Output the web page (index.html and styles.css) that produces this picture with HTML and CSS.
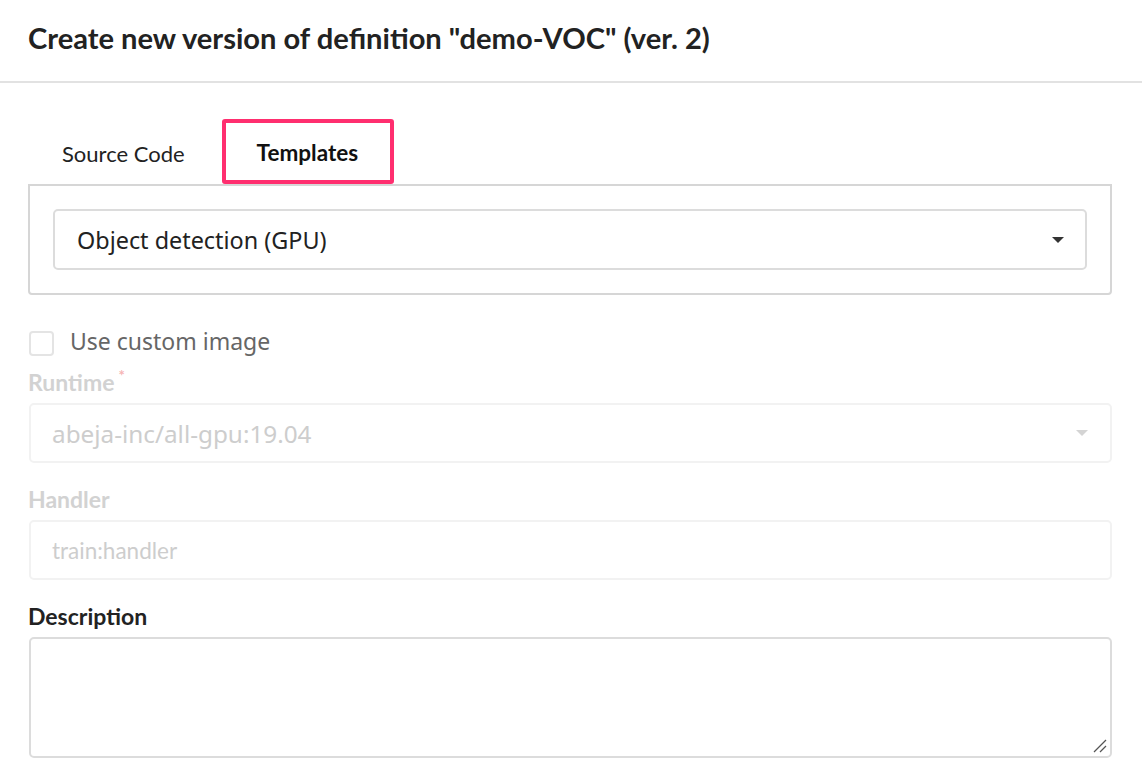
FILE: index.html
```html
<!DOCTYPE html>
<html>
<head>
<meta charset="utf-8">
<link rel="stylesheet" href="styles.css">
</head>
<body>
<header class="header">
  <h1 class="title">Create new version of definition "demo-VOC" (ver. 2)</h1>
</header>
<main class="content">
  <div class="tabs">
    <div class="tab">Source Code</div>
    <div class="tab tab-active">Templates</div>
  </div>
  <div class="tab-panel">
    <div class="select">
      <span class="select-text">Object detection (GPU)</span>
      <span class="caret"></span>
    </div>
  </div>
  <label class="check-row">
    <span class="checkbox"></span>
    <span class="check-label">Use custom image</span>
  </label>
  <div class="field">
    <div class="label label-disabled">Runtime<span class="req">*</span></div>
    <div class="input input-disabled">
      <span>abeja-inc/all-gpu:19.04</span>
      <span class="caret caret-disabled"></span>
    </div>
  </div>
  <div class="field">
    <div class="label label-disabled">Handler</div>
    <div class="input input-disabled input-lato">
      <span>train:handler</span>
    </div>
  </div>
  <div class="field">
    <div class="label">Description</div>
    <div class="textarea">
      <svg class="resizer" width="14" height="14" viewBox="0 0 14 14">
        <line x1="1" y1="13" x2="13" y2="1" stroke="#555" stroke-width="1.2"/>
        <line x1="7" y1="13" x2="13" y2="7" stroke="#555" stroke-width="1.2"/>
      </svg>
    </div>
  </div>
</main>
</body>
</html>
```

FILE: styles.css
```css
* { box-sizing: border-box; }
html, body { margin: 0; padding: 0; background: #fff; }
body {
  font-family: "Noto Sans", "Open Sans", sans-serif;
  color: #222;
  width: 1142px;
  height: 772px;
  overflow: hidden;
}
.header {
  height: 83px;
  border-bottom: 2px solid #e2e2e2;
  padding: 0 28px;
  display: flex;
  align-items: center;
}
.title {
  margin: 0;
  font-family: Lato, sans-serif;
  font-weight: 700;
  font-size: 29.1px;
  color: #222;
  position: relative;
  top: -3px;
}
.content {
  padding: 36px 30px 0 28px;
}
.tabs {
  display: flex;
  align-items: stretch;
  height: 65px;
  position: relative;
  z-index: 1;
}
.tab {
  font-family: Lato, sans-serif;
  font-size: 22px;
  color: #222;
  display: flex;
  align-items: center;
  padding: 0 33px 0 30px;
  border: 4px solid transparent;
  border-bottom: none;
}
.tab-active {
  font-weight: 700;
  font-size: 22.5px;
  color: #111;
  border: 4px solid #ff2e6f;
  border-radius: 3px;
  padding: 2px 32px 0 31px;
  background: #fff;
}
.tab-panel {
  border: 2px solid #d6d6d6;
  border-radius: 0 0 4px 4px;
  padding: 23px 23px;
  margin-top: 0;
}
.select {
  height: 61px;
  border: 2px solid #dcdcdc;
  border-radius: 5px;
  display: flex;
  align-items: center;
  justify-content: space-between;
  padding: 0 21px 0 22px;
  font-size: 23.4px;
  color: #222;
}
.caret {
  width: 0;
  height: 0;
  border-left: 6px solid transparent;
  border-right: 6px solid transparent;
  border-top: 6px solid #333;
}
.caret-disabled { border-top-color: #d4d4d4; }
.check-row {
  display: flex;
  align-items: center;
  margin-top: 35px;
  height: 26px;
  margin-left: 1px;
}
.checkbox {
  width: 25px;
  height: 25px;
  border: 2px solid #e4e4e4;
  border-radius: 4px;
  background: #fff;
}
.check-label {
  margin-left: 16px;
  font-size: 23px;
  color: #666;
  position: relative;
  top: -2px;
}
.field { margin-top: 14px; }
.field + .field { margin-top: 24px; }
.label {
  font-family: Lato, sans-serif;
  font-weight: 700;
  font-size: 23px;
  height: 24px;
  line-height: 24px;
  color: #222;
  margin-bottom: 9px;
}
.label-disabled { color: #d2d2d2; }
.req {
  color: #f6b4b4;
  font-size: 15px;
  vertical-align: top;
  margin-left: 4px;
  position: relative;
  top: -7px;
}
.input {
  height: 60px;
  border: 2px solid #f2f2f2;
  border-radius: 5px;
  margin-left: 1px;
  display: flex;
  align-items: center;
  justify-content: space-between;
  padding: 0 22px 0 21px;
  font-size: 24.3px;
}
.input-lato {
  font-family: Lato, sans-serif;
  font-size: 22.5px;
}
.input-disabled { color: #cdcdcd; }
.textarea {
  height: 121px;
  border: 2px solid #dcdcdc;
  border-radius: 5px;
  margin-left: 1px;
  position: relative;
}
.resizer {
  position: absolute;
  right: 3px;
  bottom: 3px;
}
```
